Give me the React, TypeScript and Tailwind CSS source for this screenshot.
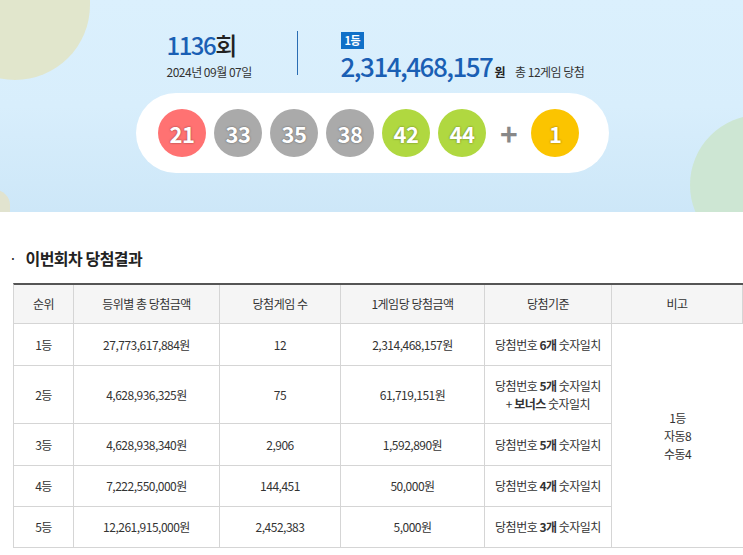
const balls = [
  { n: 21, c: "bg-[#ff7272]" },
  { n: 33, c: "bg-[#aaaaaa]" },
  { n: 35, c: "bg-[#aaaaaa]" },
  { n: 38, c: "bg-[#aaaaaa]" },
  { n: 42, c: "bg-[#b0d840]" },
  { n: 44, c: "bg-[#b0d840]" },
];

const rows = [
  { r: "1등", total: "27,773,617,884원", cnt: "12", each: "2,314,468,157원", k: "6", h: "h-[42px]" },
  { r: "2등", total: "4,628,936,325원", cnt: "75", each: "61,719,151원", k: "5", bonus: true, h: "h-[58px]" },
  { r: "3등", total: "4,628,938,340원", cnt: "2,906", each: "1,592,890원", k: "5", h: "h-[42px]" },
  { r: "4등", total: "7,222,550,000원", cnt: "144,451", each: "50,000원", k: "4", h: "h-[41px]" },
  { r: "5등", total: "12,261,915,000원", cnt: "2,452,383", each: "5,000원", k: "3", h: "h-[41px]" },
];

const Ball = ({ n, c }: { n: number; c: string }) => (
  <div className={`w-[48px] h-[48px] rounded-full ${c} flex items-center justify-center text-white text-[22px] font-bold [text-shadow:0_0_2px_rgba(0,0,0,0.5)]`}>
    {n}
  </div>
);

export default function App() {
  const cell = "border-r border-b border-[#d5d5d5] flex items-center justify-center text-center";
  return (
    <div className="w-[743px] h-[555px] overflow-hidden bg-white text-[#333] text-[12px] tracking-[-0.5px]" style={{ fontFamily: '"Noto Sans CJK KR", "Noto Sans", sans-serif' }}>
      <div className="relative h-[212px] bg-gradient-to-b from-[#dbf0fd] via-[#d8eefc] to-[#cde7f8] overflow-hidden">
        <div className="absolute -left-[60px] -top-[100px] w-[150px] h-[180px] rounded-full bg-[#e1e6cc]" />
        <div className="absolute -left-[20px] top-[190px] w-[30px] h-[40px] rounded-full bg-[#e1e3cf]" />
        <div className="absolute left-[690px] top-[115px] w-[140px] h-[140px] rounded-full bg-[#cde6d3]" />
        <div className="relative flex flex-col items-center pt-[31px]">
          <div className="flex items-start ml-[14px]">
            <div className="w-[130px]">
              <div className="text-[24px] leading-[28px] text-[#1a5fb4] font-medium tracking-[-1.5px]">
                1136<span className="text-[#222]">회</span>
              </div>
              <div className="text-[12px] text-[#333] mt-[4px]">2024년 09월 07일</div>
            </div>
            <div className="w-px h-[44px] bg-[#2a6db3] mr-[43px]" />
            <div className="w-[250px]">
              <div className="inline-block bg-[#1070c8] text-white text-[11px] px-[4px] leading-[17px] font-bold">1등</div>
              <div className="flex items-baseline mt-[4px]">
                <span className="text-[26px] leading-[26px] text-[#1a5fb4] font-medium tracking-[-1.5px]">2,314,468,157</span>
                <span className="text-[12px] font-bold text-[#222] ml-[2px]">원</span>
                <span className="text-[12px] ml-[10px] text-[#333]">총 12게임 당첨</span>
              </div>
            </div>
          </div>
          <div className="mt-[12px] w-[473px] h-[80px] bg-white rounded-full flex items-center pl-[22px] gap-[8px] ml-[2px]">
            {balls.map((b) => (
              <Ball key={b.n} {...b} />
            ))}
            <span className="text-[#888] text-[30px] font-bold mx-[6px] leading-none">+</span>
            <Ball n={1} c="bg-[#fbc400]" />
          </div>
        </div>
      </div>
      <div className="pt-[34px] pl-[10px] flex items-center text-[16px] font-bold text-[#222]">
        <span className="text-[10px] mr-[10px]">·</span>이번회차 당첨결과
      </div>
      <div className="ml-[13px] mt-[13px] border-t-2 border-[#555] border-l border-l-[#d5d5d5]">
        <div className="grid grid-cols-[60px_146px_121px_144px_127px_1fr] bg-[#f5f5f5] h-[39px]">
          {["순위", "등위별 총 당첨금액", "당첨게임 수", "1게임당 당첨금액", "당첨기준", "비고"].map((t) => (
            <div key={t} className={cell}>{t}</div>
          ))}
        </div>
        <div className="flex">
          <div className="grid grid-cols-[60px_146px_121px_144px_127px] shrink-0">
            {rows.map((r) => (
              <div key={r.r} className="contents">
                <div className={`${cell} ${r.h}`}>{r.r}</div>
                <div className={`${cell} ${r.h}`}>{r.total}</div>
                <div className={`${cell} ${r.h}`}>{r.cnt}</div>
                <div className={`${cell} ${r.h}`}>{r.each}</div>
                <div className={`${cell} ${r.h} flex-col leading-[18px]`}>
                  <div>당첨번호 <b>{r.k}개</b> 숫자일치</div>
                  {r.bonus && <div>+ <b>보너스</b> 숫자일치</div>}
                </div>
              </div>
            ))}
          </div>
          <div className="flex-1 border-b border-[#d5d5d5] flex flex-col items-center justify-center leading-[18px]">
            <div>1등</div>
            <div>자동8</div>
            <div>수동4</div>
          </div>
        </div>
      </div>
    </div>
  );
}
